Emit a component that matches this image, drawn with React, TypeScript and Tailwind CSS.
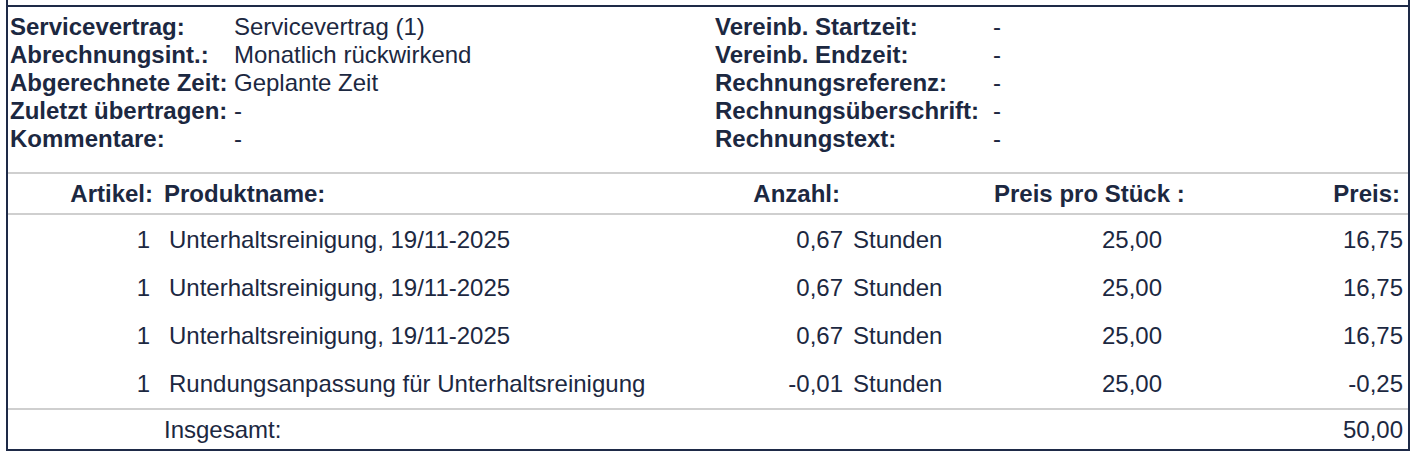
import React from "react";

const rows = [
  { art: "1", name: "Unterhaltsreinigung, 19/11-2025", qty: "0,67", unit: "Stunden", price: "25,00", total: "16,75" },
  { art: "1", name: "Unterhaltsreinigung, 19/11-2025", qty: "0,67", unit: "Stunden", price: "25,00", total: "16,75" },
  { art: "1", name: "Unterhaltsreinigung, 19/11-2025", qty: "0,67", unit: "Stunden", price: "25,00", total: "16,75" },
  { art: "1", name: "Rundungsanpassung für Unterhaltsreinigung", qty: "-0,01", unit: "Stunden", price: "25,00", total: "-0,25" },
];

const left = [
  ["Servicevertrag:", "Servicevertrag (1)"],
  ["Abrechnungsint.:", "Monatlich rückwirkend"],
  ["Abgerechnete Zeit:", "Geplante Zeit"],
  ["Zuletzt übertragen:", "-"],
  ["Kommentare:", "-"],
];

const right = [
  ["Vereinb. Startzeit:", "-"],
  ["Vereinb. Endzeit:", "-"],
  ["Rechnungsreferenz:", "-"],
  ["Rechnungsüberschrift:", "-"],
  ["Rechnungstext:", "-"],
];

export default function App() {
  return (
    <div
      className="w-[1422px] h-[466px] bg-white text-[#1c2841] text-[24px] leading-[28px]"
      style={{ fontFamily: '"Liberation Sans", Arial, sans-serif' }}
    >
      <div className="ml-[6px] w-[1404px] border-x-2 border-b-2 border-[#1e2a47] pt-[5px]">
        <div className="border-t-2 border-[#1e2a47]">
          {/* Info section */}
          <div className="flex pt-[6px] pb-[19px] pl-[2px]">
            <div className="w-[705px] shrink-0">
              {left.map(([l, v]) => (
                <div key={l} className="flex whitespace-nowrap">
                  <div className="w-[224px] shrink-0 font-bold">{l}</div>
                  <div>{v}</div>
                </div>
              ))}
            </div>
            <div>
              {right.map(([l, v]) => (
                <div key={l} className="flex whitespace-nowrap">
                  <div className="w-[278px] shrink-0 font-bold">{l}</div>
                  <div>{v}</div>
                </div>
              ))}
            </div>
          </div>

          {/* Table header */}
          <div className="border-t-2 border-[#cfcfcf] h-[41px] flex items-center font-bold whitespace-nowrap">
            <div className="w-[145px] shrink-0 text-right">Artikel:</div>
            <div className="ml-[11px] w-[536px] shrink-0">Produktname:</div>
            <div className="w-[140px] shrink-0 text-right">Anzahl:</div>
            <div className="ml-[154px] shrink-0">Preis pro Stück :</div>
            <div className="flex-1 text-right pr-[8px]">Preis:</div>
          </div>

          {/* Table body */}
          <div className="border-t-2 border-[#cfcfcf] pt-[1px]">
            {rows.map((r, i) => (
              <div key={i} className="h-[48px] flex items-center whitespace-nowrap">
                <div className="w-[142px] shrink-0 text-right">{r.art}</div>
                <div className="ml-[19px] w-[531px] shrink-0">{r.name}</div>
                <div className="w-[143px] shrink-0 text-right">{r.qty}</div>
                <div className="ml-[10px] w-[107px] shrink-0">{r.unit}</div>
                <div className="w-[202px] shrink-0 text-right">{r.price}</div>
                <div className="flex-1 text-right pr-[5px]">{r.total}</div>
              </div>
            ))}
          </div>

          {/* Total */}
          <div className="border-t-2 border-[#cfcfcf] h-[41px] flex items-center whitespace-nowrap">
            <div className="pl-[156px] flex-1">Insgesamt:</div>
            <div className="pr-[5px] text-right">50,00</div>
          </div>
        </div>
      </div>
    </div>
  );
}
